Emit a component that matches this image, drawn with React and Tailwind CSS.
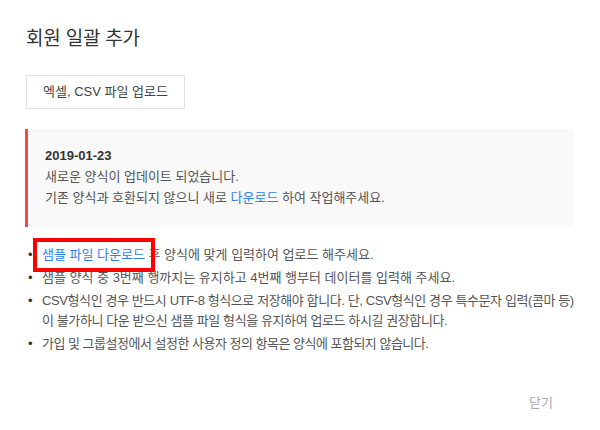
import React from "react";

const App = () => {
  return (
    <div
      className="w-[600px] h-[430px] bg-white text-[#555] relative"
      style={{ fontFamily: '"Liberation Sans", "Noto Sans CJK KR", sans-serif' }}
    >
      <div className="px-[26px] pt-[26px]">
        <h2 className="text-[19px] leading-[26px] text-[#333] tracking-[-0.2px]">회원 일괄 추가</h2>

        <button className="mt-[23px] w-[159px] h-[34px] border border-[#e3e3e3] bg-white text-[13px] text-[#444]">
          엑셀, CSV 파일 업로드
        </button>

        <div className="mt-[20px] ml-[-1px] bg-[#f9f9f9] border-l-[3px] border-[#f74848] pl-[17px] pt-[16px] pb-[19px] w-[549px] text-[13px] leading-[21px]">
          <p className="font-bold text-[#333]">2019-01-23</p>
          <p>새로운 양식이 업데이트 되었습니다.</p>
          <p>
            기존 양식과 호환되지 않으니 새로 <span className="text-[#2f7ff0]">다운로드</span> 하여 작업해주세요.
          </p>
        </div>

        <ul className="mt-[18px] text-[13px] leading-[20px] flex flex-col gap-[3px]">
          <li className="flex">
            <span className="w-[16px] shrink-0 pl-[2px] text-[#333]">•</span>
            <span>
              <span className="relative inline-block leading-[20px] text-[#2f7ff0]">
                샘플 파일 다운로드
                <span className="absolute left-[-9px] right-[-10px] top-[-7px] bottom-[-7px] border-[4px] border-[#ff0000]"></span>
              </span>{" "}
              후 양식에 맞게 입력하여 업로드 해주세요.
            </span>
          </li>
          <li className="flex">
            <span className="w-[16px] shrink-0 pl-[2px] text-[#333]">•</span>
            <span>샘플 양식 중 3번째 행까지는 유지하고 4번째 행부터 데이터를 입력해 주세요.</span>
          </li>
          <li className="flex">
            <span className="w-[16px] shrink-0 pl-[2px] text-[#333]">•</span>
            <span className="tracking-[-0.4px]">
              <span className="whitespace-nowrap">
                CSV형식인 경우 반드시 UTF-8 형식으로 저장해야 합니다. 단, CSV형식인 경우 특수문자 입력(콤마 등)
              </span>
              <br />
              이 불가하니 다운 받으신 샘플 파일 형식을 유지하여 업로드 하시길 권장합니다.
            </span>
          </li>
          <li className="flex">
            <span className="w-[16px] shrink-0 pl-[2px] text-[#333]">•</span>
            <span className="tracking-[-0.5px]">가입 및 그룹설정에서 설정한 사용자 정의 항목은 양식에 포함되지 않습니다.</span>
          </li>
        </ul>
      </div>

      <div className="absolute right-[47px] top-[393px] text-[13px] text-[#aaa]">닫기</div>
    </div>
  );
};

export default App;
